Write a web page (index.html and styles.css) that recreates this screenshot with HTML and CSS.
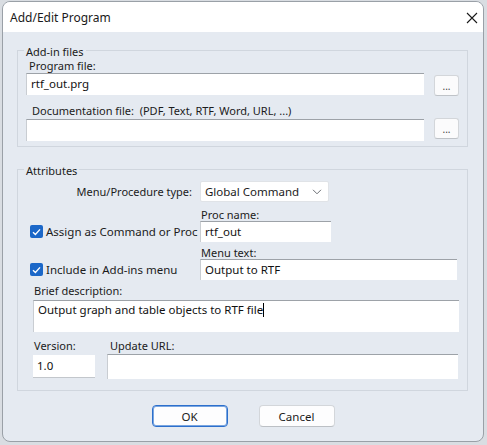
FILE: index.html
```html
<!DOCTYPE html>
<html>
<head>
<meta charset="utf-8">
<link rel="stylesheet" href="styles.css">
</head>
<body>
<div class="window">
  <div class="titlebar">
    <span class="title">Add/Edit Program</span>
    <svg class="close" width="12" height="12" viewBox="0 0 12 12"><path d="M1 1 L11 11 M11 1 L1 11" stroke="#1a1a1a" stroke-width="1.1" fill="none"/></svg>
  </div>
  <div class="content">
    <fieldset class="group g1">
      <legend>Add-in files</legend>
      <div class="lbl lbl-prog">Program file:</div>
      <div class="filerow">
        <div class="edit wide">rtf_out.prg</div>
        <button class="browse b1">...</button>
      </div>
      <div class="lbl lbl-doc">Documentation file:&nbsp; (PDF, Text, RTF, Word, URL, ...)</div>
      <div class="filerow">
        <div class="edit wide"></div>
        <button class="browse b2">...</button>
      </div>
    </fieldset>

    <fieldset class="group g2">
      <legend>Attributes</legend>
      <div class="typerow">
        <span class="typelbl">Menu/Procedure type:</span>
        <div class="select"><span>Global Command</span>
          <svg width="10" height="6" viewBox="0 0 10 6"><path d="M1 0.8 L5 4.8 L9 0.8" stroke="#6b6f74" stroke-width="1" fill="none"/></svg>
        </div>
      </div>
      <div class="optrow r1">
        <label class="check"><span class="box"><svg width="9" height="8" viewBox="0 0 9 8"><path d="M1 4.2 L3.4 6.4 L8 1.4" stroke="#fff" stroke-width="1.4" fill="none"/></svg></span>Assign as Command or Proc</label>
        <div class="field">
          <div class="lbl sm">Proc name:</div>
          <div class="edit proc">rtf_out</div>
        </div>
      </div>
      <div class="optrow r2">
        <label class="check"><span class="box"><svg width="9" height="8" viewBox="0 0 9 8"><path d="M1 4.2 L3.4 6.4 L8 1.4" stroke="#fff" stroke-width="1.4" fill="none"/></svg></span>Include in Add-ins menu</label>
        <div class="field">
          <div class="lbl sm">Menu text:</div>
          <div class="edit menu">Output to RTF</div>
        </div>
      </div>
      <div class="desc">
        <div class="lbl">Brief description:</div>
        <div class="edit area">Output graph and table objects to RTF file<span class="caret"></span></div>
      </div>
      <div class="verrow">
        <div class="vcol">
          <div class="lbl">Version:</div>
          <div class="edit ver">1.0</div>
        </div>
        <div class="ucol">
          <div class="lbl">Update URL:</div>
          <div class="edit url"></div>
        </div>
      </div>
    </fieldset>

    <div class="buttons">
      <button class="btn ok">OK</button>
      <button class="btn">Cancel</button>
    </div>
  </div>
</div>
</body>
</html>
```
FILE: styles.css
```css
* { box-sizing: border-box; }
html, body { margin: 0; padding: 0; }
body {
  background: #d9dde2;
  width: 487px;
  height: 445px;
  overflow: hidden;
  font-family: "Noto Sans", "Open Sans", sans-serif;
  font-size: 11px;
  color: #1b1b1b;
  white-space: nowrap;
}
.window {
  margin: 1px 0 0 2px;
  width: 482px;
  height: 441px;
  border: 1px solid #9aa0a7;
  border-radius: 8px;
  background: #e5eaf1;
  overflow: hidden;
}
.titlebar {
  height: 30px;
  background: #ffffff;
  display: flex;
  align-items: center;
  justify-content: space-between;
  padding: 0 5px 0 7px;
}
.title { font-size: 12px; color: #1a1a1a; }
.close { margin-top: 1px; }
.content { padding: 0 0 0 14px; }
.group {
  margin: 0;
  width: 451px;
  border: 1px solid #d0d6de;
  padding: 0 8px 5px 8px;
  min-width: 0;
}
.group legend {
  padding: 4px 2px 0 2px;
  margin-left: -2px;
  line-height: 14px;
}
.g1 { margin-top: 9px; }
.g2 { margin-top: 13px; padding-bottom: 11px; }
.lbl { line-height: 14px; }
.lbl-prog { margin-left: 3px; }
.lbl-doc { margin-left: 6px; margin-top: 8px; margin-bottom: 1px; }
.filerow { display: flex; align-items: flex-start; gap: 10px; }
.edit {
  background: #ffffff;
  border-top: 1px solid #9da2a8;
  border-left: 1px solid #c9cdd2;
  padding: 0 4px;
  line-height: 20px;
  height: 22px;
  color: #111;
  font-size: 11.5px;
}
.wide { width: 398px; }
.browse {
  width: 25px;
  height: 21px;
  padding: 0;
  background: #fbfbfc;
  border: 1px solid #d3d6da;
  border-bottom-color: #bfc3c8;
  border-radius: 3px;
  font: inherit;
  font-size: 10px;
  color: #444;
  line-height: 14px;
}
.b1 { margin-top: 2px; }
.b2 { margin-top: -1px; }
.typerow { display: flex; align-items: center; gap: 8px; margin-top: 3px; }
.typelbl { width: 166px; text-align: right; }
.select {
  width: 129px;
  height: 21px;
  background: #fff;
  border: 1px solid #e0e3e7;
  border-radius: 2px;
  display: flex;
  align-items: center;
  justify-content: space-between;
  padding: 0 6px 0 4px;
  font-size: 11.5px;
}
.optrow { display: flex; align-items: flex-end; }
.r1 { margin-top: 6px; }
.r2 { margin-top: 4px; }
.check {
  width: 174px;
  height: 21px;
  display: flex;
  align-items: center;
  padding-left: 4px;
  gap: 3px;
  font-size: 11.5px;
}
.box {
  width: 13px;
  height: 13px;
  border-radius: 2px;
  background: #1b67c8;
  display: flex;
  align-items: center;
  justify-content: center;
}
.lbl.sm { line-height: 13px; margin-left: 1px; }
.proc { width: 131px; height: 21px; line-height: 19px; }
.menu { width: 257px; height: 21px; line-height: 19px; }
.desc { margin-left: 7px; margin-top: 4px; }
.desc .lbl { margin-left: 1px; }
.area { width: 426px; height: 32px; margin-top: 2px; line-height: 18px; }
.caret {
  display: inline-block;
  width: 1px;
  height: 14px;
  background: #000;
  vertical-align: -3px;
}
.verrow { display: flex; gap: 12px; margin-left: 7px; margin-top: 7px; }
.vcol .lbl { margin-left: 1px; }
.ucol .lbl { margin-left: 3px; }
.ver {
  width: 62px;
  height: 23px;
  margin-top: 2px;
  border-top: none;
  border-left: none;
  border-bottom: 1px solid #c3c7cc;
  line-height: 22px;
}
.url { width: 351px; height: 25px; margin-top: 1px; }
.buttons {
  display: flex;
  justify-content: center;
  gap: 31px;
  margin: 14px 0 0 -14px;
}
.btn {
  width: 76px;
  height: 22px;
  padding: 0;
  font: inherit;
  font-size: 11.5px;
  color: #1b1b1b;
  background: #fdfdfe;
  border: 1px solid #d3d6da;
  border-bottom-color: #bcc0c5;
  border-radius: 4px;
}
.btn.ok { border: 1px solid #2c6fcc; box-shadow: inset 0 0 0 1px #7aa6e0; }
```
